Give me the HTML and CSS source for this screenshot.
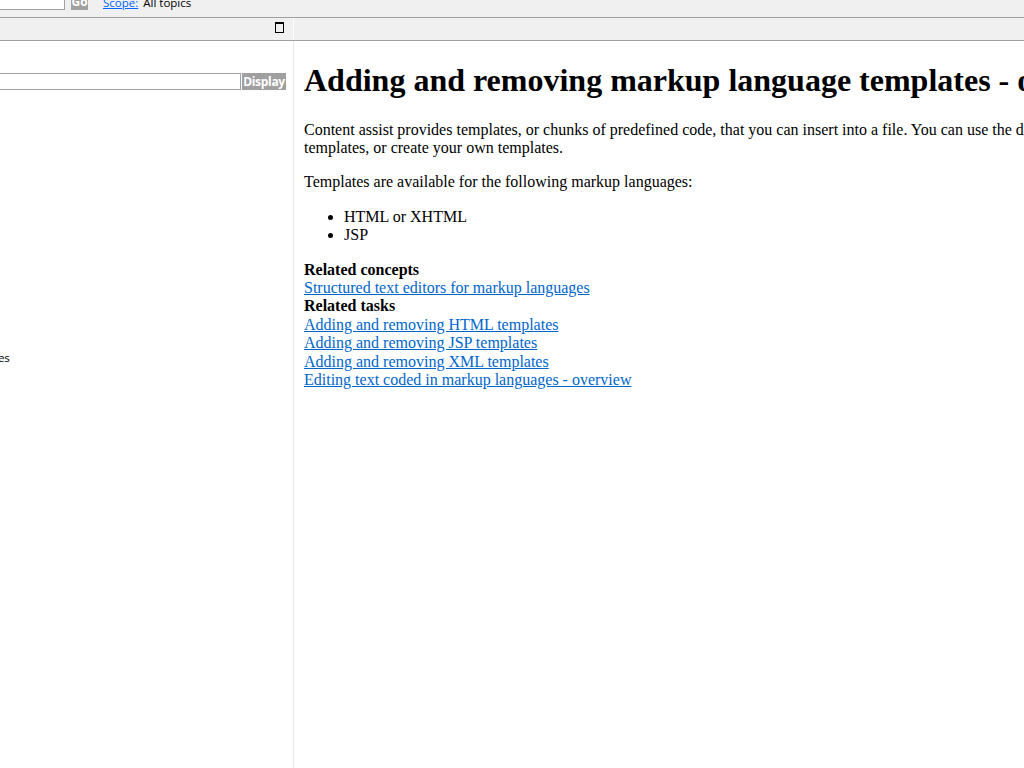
FILE: index.html
```html
<!DOCTYPE html>
<html>
<head>
<meta charset="utf-8">
<title>Help</title>
<link rel="stylesheet" href="styles.css">
</head>
<body>
<div class="topbar">
  <div class="topinner">
    <span class="topsearch"></span>
    <span class="gobtn">Go</span>
    <a class="scope" href="#">Scope:</a>
    <span class="scopeval">All topics</span>
  </div>
</div>
<div class="toolbar">
  <div class="toolleft">
    <svg class="maxicon" width="9" height="11" viewBox="0 0 9 11">
      <rect x="0.5" y="0.5" width="8" height="10" fill="none" stroke="#000" stroke-width="1"/>
      <rect x="0" y="0" width="9" height="2" fill="#000"/>
    </svg>
  </div>
  <div class="toolright"></div>
</div>
<div class="main">
  <div class="leftpane">
    <div class="indexrow">
      <span class="indexinput"></span>
      <span class="displaybtn">Display</span>
    </div>
    <div class="cutitem"><span>Markup language templates</span></div>
  </div>
  <div class="rightpane">
    <div class="content">
      <h1>Adding and removing markup language templates - overview</h1>
      <p>Content assist provides templates, or chunks of predefined code, that you can insert into a file. You can use the default templates, or create your own templates.</p>
      <p>Templates are available for the following markup languages:</p>
      <ul>
        <li>HTML or XHTML</li>
        <li>JSP</li>
      </ul>
      <div class="related">
        <div class="relhead">Related concepts</div>
        <div><a href="#">Structured text editors for markup languages</a></div>
        <div class="relhead">Related tasks</div>
        <div><a href="#">Adding and removing HTML templates</a></div>
        <div><a href="#">Adding and removing JSP templates</a></div>
        <div><a href="#">Adding and removing XML templates</a></div>
        <div><a href="#">Editing text coded in markup languages - overview</a></div>
      </div>
    </div>
  </div>
</div>
</body>
</html>
```
FILE: styles.css
```css
html, body {
  margin: 0;
  padding: 0;
  width: 1024px;
  height: 768px;
  overflow: hidden;
  background: #ffffff;
}

.topbar {
  height: 17px;
  background: #f0f0f0;
  border-bottom: 1px solid #a0a0a0;
  overflow: hidden;
  font-family: "Open Sans", "Liberation Sans", sans-serif;
  font-size: 11.5px;
}

.topinner {
  display: flex;
  align-items: flex-start;
  margin-top: -7px;
  height: 19px;
}

.topsearch {
  display: block;
  width: 120px;
  height: 15px;
  margin-left: -57px;
  background: #ffffff;
  border: 1px solid #a0a0a0;
}

.gobtn {
  display: block;
  margin-left: 6px;
  width: 17px;
  height: 17px;
  background: #a0a0a0;
  color: #ffffff;
  font-weight: bold;
  line-height: 18px;
  text-align: center;
  font-size: 12px;
}

.scope {
  margin-left: 15px;
  color: #0066ff;
  text-decoration: underline;
  line-height: 19px;
}

.scopeval {
  margin-left: 5px;
  color: #000000;
  line-height: 19px;
}

.toolbar {
  display: flex;
  height: 22px;
  background: #f0f0f0;
  border-bottom: 1px solid #a0a0a0;
}

.toolleft {
  width: 293px;
  border-right: 1px solid #ffffff;
  display: flex;
  justify-content: flex-end;
  align-items: flex-start;
}

.maxicon {
  display: block;
  margin-top: 4px;
  margin-right: 9px;
}

.toolright {
  flex: 1;
}

.main {
  display: flex;
  height: 727px;
}

.leftpane {
  width: 293px;
  border-right: 1px solid #e8e8e8;
  overflow: hidden;
  font-family: "Open Sans", "Liberation Sans", sans-serif;
  font-size: 12px;
}

.indexrow {
  display: flex;
  margin-top: 32px;
  padding-right: 7px;
  height: 17px;
}

.indexinput {
  display: block;
  flex: 1;
  margin-left: -20px;
  height: 15px;
  background: #ffffff;
  border: 1px solid #a0a0a0;
}

.displaybtn {
  display: block;
  margin-left: 1px;
  width: 44px;
  height: 17px;
  background: #a0a0a0;
  color: #ffffff;
  font-weight: bold;
  line-height: 17px;
  text-align: center;
  letter-spacing: -0.3px;
}

.cutitem {
  margin-top: 260px;
  white-space: nowrap;
  line-height: 16px;
  font-size: 11.5px;
}

.cutitem span {
  display: inline-block;
  margin-left: -140px;
}

.rightpane {
  flex: 1;
  overflow: hidden;
  padding-left: 10px;
}

.content {
  width: 810px;
  font-family: "Liberation Serif", "Times New Roman", serif;
  font-size: 16px;
  line-height: 1.15;
  color: #000000;
}

.content h1 {
  font-size: 32px;
  font-weight: bold;
  margin: 21.44px 0;
  white-space: nowrap;
}

.content p {
  margin: 16px 0;
}

.content ul {
  margin: 16px 0;
  padding-left: 40px;
}

.relhead {
  font-weight: bold;
}

.content a {
  color: #0066cc;
  text-decoration: underline;
}
```
